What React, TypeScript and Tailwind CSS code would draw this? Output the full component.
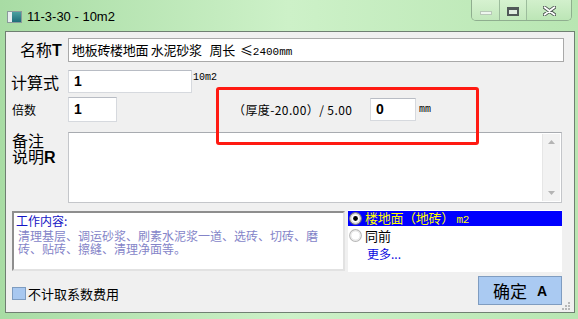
const cjk = "font-['Noto_Sans_CJK_SC',sans-serif]"

const Radio = ({ checked, dim }: { checked?: boolean; dim?: boolean }) => (
	<svg width="13" height="13" viewBox="0 0 13 13" className="shrink-0">
		<circle cx="6.5" cy="6.5" r="5.8" fill="#fff" stroke={dim ? "#b8b8b8" : "#7a7a7a"} strokeWidth="1.2" />
		<circle cx="6.5" cy="6.5" r="4.6" fill="none" stroke={dim ? "#e4e4e4" : "#d0d0d0"} strokeWidth="1" />
		{checked && <circle cx="6.5" cy="6.5" r="2.4" fill="#000" />}
	</svg>
)

const TitleBar = () => (
	<div className="h-[31px] flex items-start shrink-0">
		<div className="mt-[11px] ml-[7px] w-[15px] h-[12px] border border-[#8a9a9a] bg-white flex">
			<div className="w-[4px] bg-[#e8eef0]" />
			<div className="flex-1 bg-gradient-to-b from-[#4aa0a0] to-[#1e6e7a]" />
		</div>
		<span className="ml-[5px] mt-[9px] text-[13px] leading-[15px] text-black font-['Liberation_Sans',sans-serif]">
			11-3-30 - 10m2
		</span>
		<div className="ml-auto mr-[6px] flex h-[21px] border border-t-0 border-[#8fae8f] rounded-b-[5px] overflow-hidden">
			<div className="w-[28px] flex items-center justify-center bg-gradient-to-b from-[#d6f2d0] to-[#c2e8bc] border-r border-[#9cbc9c]">
				<div className="w-[12px] h-[4px] mt-[6px] border border-[#b8c8b8] bg-[#eef6ee]" />
			</div>
			<div className="w-[27px] flex items-center justify-center bg-gradient-to-b from-[#d6f2d0] to-[#c2e8bc] border-r border-[#9cbc9c]">
				<div className="w-[12px] h-[9px] mt-[2px] border-2 border-t-[3px] border-[#505858] bg-[#e0ece0]" />
			</div>
			<div className="w-[44px] flex items-center justify-center bg-gradient-to-b from-[#d2f0cc] to-[#bce6b6]">
				<svg width="13" height="10" viewBox="0 0 13 10" className="mt-[2px]">
					<path d="M1 1 L12 9 M12 1 L1 9" stroke="#4a5450" strokeWidth="3.6" strokeLinecap="round" />
					<path d="M1.5 1.3 L11.5 8.7 M11.5 1.3 L1.5 8.7" stroke="#fff" strokeWidth="1.8" strokeLinecap="round" />
				</svg>
			</div>
		</div>
	</div>
)

export default function App() {
	return (
		<div className={`w-[578px] h-[319px] flex flex-col overflow-hidden bg-gradient-to-r from-[#a8dca4] via-[#cdf1c8] to-[#b8e6b2] ${cjk}`}>
			<TitleBar />
			<div className="relative flex-1 ml-[5px] mr-[3px] mb-[6px] border border-[#6f7f72] bg-[#f0f0f0] flex flex-col text-black">
				{/* 名称 */}
				<div className="mt-[6px] flex items-center h-[24px]">
					<div className="w-[62px] pl-[14px] text-[16px] leading-none whitespace-nowrap">
						名称<span className="font-['Liberation_Sans',sans-serif] font-bold">T</span>
					</div>
					<div className="w-[496px] h-[24px] border border-[#a9a9a9] bg-white pl-[3px] text-[13px] leading-[22px] whitespace-pre tracking-[-0.3px]">
						地板砖楼地面 水泥砂浆   周长  ≤<span className="text-[11px] tracking-normal font-['Liberation_Mono',monospace]">2400mm</span>
					</div>
				</div>

				{/* 计算式 */}
				<div className="mt-[8px] flex items-center h-[23px]">
					<div className="w-[62px] pl-[5px] text-[16px] leading-none whitespace-nowrap">计算式</div>
					<div className="w-[124px] h-[23px] border border-[#d6d9de] border-t-[#b8bcc4] bg-white pl-[5px] text-[14px] leading-[21px] font-bold font-['Liberation_Sans',sans-serif]">
						1
					</div>
					<span className="ml-[1px] self-start mt-[3px] text-[10px] leading-none font-['Liberation_Mono',monospace]">10m2</span>
				</div>

				{/* 倍数 */}
				<div className="mt-[4px] flex items-center h-[25px]">
					<div className="w-[62px] pl-[6px] text-[12px] leading-none whitespace-nowrap">倍数</div>
					<div className="w-[49px] h-[25px] border border-[#d6d9de] border-t-[#b8bcc4] bg-white pl-[5px] text-[14px] leading-[23px] font-bold font-['Liberation_Sans',sans-serif]">
						1
					</div>
					<span className="ml-[116px] w-[137px] text-[12px] leading-none whitespace-pre tracking-[0.4px]">（厚度-20.00）/ 5.00</span>
					<div className="w-[46px] h-[23px] border border-[#d6d9de] border-t-[#b8bcc4] bg-white pl-[5px] text-[14px] leading-[21px] font-bold font-['Liberation_Sans',sans-serif]">
						0
					</div>
					<span className="ml-[3px] text-[10px] leading-none font-['Liberation_Mono',monospace]">mm</span>
				</div>

				{/* 备注 */}
				<div className="mt-[10px] flex h-[71px]">
					<div className="w-[62px] pl-[6px] text-[16px] leading-[16px]">
						备注
						<br />
						说明<span className="font-['Liberation_Sans',sans-serif] font-bold">R</span>
					</div>
					<div className="w-[494px] border border-[#c4c6ca] border-t-[#a8abb0] bg-white flex justify-end">
						<div className="w-[18px] my-[1px] mr-[1px] bg-[#f2f2f2] border-l border-[#e6e6e6] flex flex-col justify-between items-center py-[6px]">
							<svg width="7" height="4" viewBox="0 0 7 4"><path d="M0 4 L3.5 0 L7 4 Z" fill="#b4b4b4" /></svg>
							<svg width="7" height="4" viewBox="0 0 7 4"><path d="M0 0 L3.5 4 L7 0 Z" fill="#b4b4b4" /></svg>
						</div>
					</div>
				</div>

				{/* 工作内容 + 选项 */}
				<div className="mt-[7px] ml-[6px] flex">
					<div className="mt-[1px] w-[333px] h-[60px] bg-white border-2 border-t-[#8e8e8e] border-l-[#8e8e8e] border-r-[#e2e2e2] border-b-[#e2e2e2] px-[2px] pt-[1px]">
						<div className="text-[12px] leading-[14px] text-[#1414c4]">工作内容:</div>
						<div className="mt-[1px] ml-[2px] text-[12px] leading-[13px] text-[#8484c8] whitespace-nowrap">
							清理基层、调运砂浆、刷素水泥浆一道、选砖、切砖、磨
							<br />
							砖、贴砖、擦缝、清理净面等。
						</div>
					</div>
					<div className="ml-[3px] w-[214px] h-[62px] bg-white pt-[1px]">
						<div className="h-[15px] bg-[#0000ff] flex items-center pl-[1px]">
							<Radio checked />
							<span className="ml-[3px] text-[13px] leading-none text-[#ffff00] whitespace-pre tracking-[-0.3px]">楼地面（地砖） <span className="text-[11px] font-['Liberation_Mono',monospace]">m2</span></span>
						</div>
						<div className="mt-[2px] h-[15px] flex items-center pl-[1px]">
							<Radio dim />
							<span className="ml-[3px] text-[13px] leading-none">同前</span>
						</div>
						<div className="mt-[5px] pl-[19px] text-[12px] leading-none text-[#0a0ae0] whitespace-pre">更多...</div>
					</div>
				</div>

				{/* 底部 */}
				<div className="mt-[4px] flex items-center">
					<div className="ml-[6px] mt-[5px] w-[14px] h-[13px] bg-[#a8c8f0] border border-[#7e9cc0]" />
					<span className="ml-[2px] mt-[5px] text-[13px] leading-none">不计取系数费用</span>
					<div className="ml-auto mr-[12px] w-[84px] h-[29px] bg-[#aacaf2] border border-[#7f9cc0] flex items-center justify-center">
						<span className="text-[17px] leading-none">确定</span>
						<span className="ml-[10px] text-[14px] leading-none font-bold font-['Liberation_Sans',sans-serif]">A</span>
					</div>
				</div>

				{/* 尺寸手柄 */}
				<div className="absolute right-[4px] bottom-[2px] grid grid-cols-3 gap-[1px]">
					<div className="w-[2px] h-[2px]" />
					<div className="w-[2px] h-[2px]" />
					<div className="w-[2px] h-[2px] bg-[#b8b8b8]" />
					<div className="w-[2px] h-[2px]" />
					<div className="w-[2px] h-[2px] bg-[#b8b8b8]" />
					<div className="w-[2px] h-[2px] bg-[#b8b8b8]" />
					<div className="w-[2px] h-[2px] bg-[#b8b8b8]" />
					<div className="w-[2px] h-[2px] bg-[#b8b8b8]" />
					<div className="w-[2px] h-[2px] bg-[#b8b8b8]" />
				</div>

				{/* 标注红框 */}
				<div className="absolute left-[210px] top-[55px] w-[263px] h-[58px] border-[3px] border-[#ff1a12] rounded-[3px] pointer-events-none" />
			</div>
		</div>
	)
}
